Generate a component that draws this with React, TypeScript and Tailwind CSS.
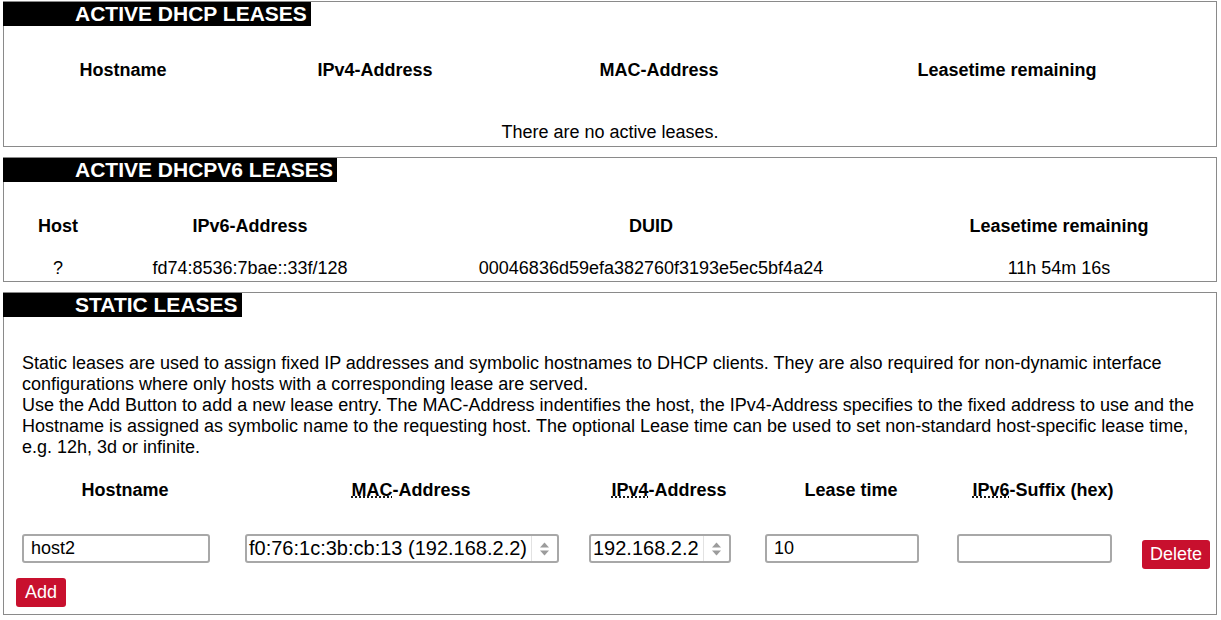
import React from 'react';

const Legend: React.FC<{ children: React.ReactNode }> = ({ children }) => (
  <div className="-ml-px w-fit bg-black pl-[72px] pr-[4px] text-[21px] font-bold leading-[24px] text-white">
    {children}
  </div>
);

const Section: React.FC<{ title: string; className?: string; children: React.ReactNode }> = ({ title, className = '', children }) => (
  <div className={`ml-[3px] mr-[4px] border border-[#8a8a8a] ${className}`}>
    <Legend>{title}</Legend>
    {children}
  </div>
);

const Spinner = () => (
  <svg width="11" height="16" viewBox="0 0 11 16" className="shrink-0">
    <path d="M5.5 1.5 L10 6.5 L1 6.5 Z" fill="#9c9c9c" />
    <path d="M5.5 14.5 L10 9.5 L1 9.5 Z" fill="#9c9c9c" />
  </svg>
);

const FakeSelect: React.FC<{ value: string; width: string }> = ({ value, width }) => (
  <div className={`flex h-[29px] ${width} items-center rounded-[3px] border-2 border-[#a8a8a8] bg-white`}>
    <span className="flex-1 overflow-hidden whitespace-nowrap pl-[2px] text-[20px] leading-[25px]">{value}</span>
    <div className="flex h-full w-[26px] items-center justify-center border-l border-[#e2e2e2]">
      <Spinner />
    </div>
  </div>
);

const TextInput: React.FC<{ value: string; width: string }> = ({ value, width }) => (
  <input
    readOnly
    value={value}
    className={`h-[29px] ${width} rounded-[3px] border-2 border-[#a8a8a8] bg-white px-[7px] text-[18px] leading-[25px] text-black outline-none`}
  />
);

export default function App() {
  return (
    <div className="min-h-screen bg-white pt-px font-['Liberation_Sans',Arial,sans-serif] text-[18px] text-black">
      <Section title="ACTIVE DHCP LEASES">
        <div className="px-[6px] pb-[3px] pt-[34px]">
          <div className="grid grid-cols-[226px_278px_290px_406px] text-center font-bold leading-[21px]">
            <div>Hostname</div>
            <div>IPv4-Address</div>
            <div>MAC-Address</div>
            <div>Leasetime remaining</div>
          </div>
          <div className="mt-[41px] text-center leading-[21px]">There are no active leases.</div>
        </div>
      </Section>

      <Section title="ACTIVE DHCPV6 LEASES" className="mt-[10px]">
        <div className="px-[6px] pb-[2px] pt-[34px]">
          <div className="grid grid-cols-[96px_288px_514px_302px] text-center font-bold leading-[21px]">
            <div>Host</div>
            <div>IPv6-Address</div>
            <div>DUID</div>
            <div>Leasetime remaining</div>
          </div>
          <div className="mt-[21px] grid grid-cols-[96px_288px_514px_302px] text-center leading-[21px]">
            <div>?</div>
            <div>fd74:8536:7bae::33f/128</div>
            <div>00046836d59efa382760f3193e5ec5bf4a24</div>
            <div>11h 54m 16s</div>
          </div>
        </div>
      </Section>

      <Section title="STATIC LEASES" className="mt-[10px]">
        <div className="pb-[7px]">
          <p className="mt-[36px] px-[18px] leading-[21px]">
            Static leases are used to assign fixed IP addresses and symbolic hostnames to DHCP clients. They are also required for non-dynamic interface configurations where only hosts with a corresponding lease are served.
            <br />
            Use the Add Button to add a new lease entry. The MAC-Address indentifies the host, the IPv4-Address specifies to the fixed address to use and the Hostname is assigned as symbolic name to the requesting host. The optional Lease time can be used to set non-standard host-specific lease time, e.g. 12h, 3d or infinite.
          </p>

          <div className="px-[6px]">
            <div className="mt-[22px] grid grid-cols-[230px_342px_174px_190px_194px_70px] text-center font-bold leading-[21px]">
              <div>Hostname</div>
              <div>
                <abbr title="Media Access Control" className="underline decoration-dotted">MAC</abbr>-Address
              </div>
              <div>
                <abbr title="Internet Protocol Version 4" className="underline decoration-dotted">IPv4</abbr>-Address
              </div>
              <div>Lease time</div>
              <div>
                <abbr title="Internet Protocol Version 6" className="underline decoration-dotted">IPv6</abbr>-Suffix (hex)
              </div>
              <div />
            </div>

            <div className="mt-[33px] grid grid-cols-[230px_342px_174px_190px_194px_70px] items-start">
              <div className="pl-[12px]">
                <TextInput value="host2" width="w-[188px]" />
              </div>
              <div className="pl-[5px]">
                <FakeSelect value="f0:76:1c:3b:cb:13 (192.168.2.2)" width="w-[314px]" />
              </div>
              <div className="pl-[7px]">
                <FakeSelect value="192.168.2.2" width="w-[142px]" />
              </div>
              <div className="pl-[9px]">
                <TextInput value="10" width="w-[154px]" />
              </div>
              <div className="pl-[11px]">
                <TextInput value="" width="w-[155px]" />
              </div>
              <div className="pl-[2px] pt-[6px]">
                <button className="h-[29px] w-[68px] rounded-[3px] bg-[#c8102e] text-[18px] leading-[29px] text-white">
                  Delete
                </button>
              </div>
            </div>
          </div>

          <button className="ml-[12px] mt-[9px] h-[29px] w-[50px] rounded-[3px] bg-[#c8102e] text-[18px] leading-[29px] text-white">
            Add
          </button>
        </div>
      </Section>
    </div>
  );
}
